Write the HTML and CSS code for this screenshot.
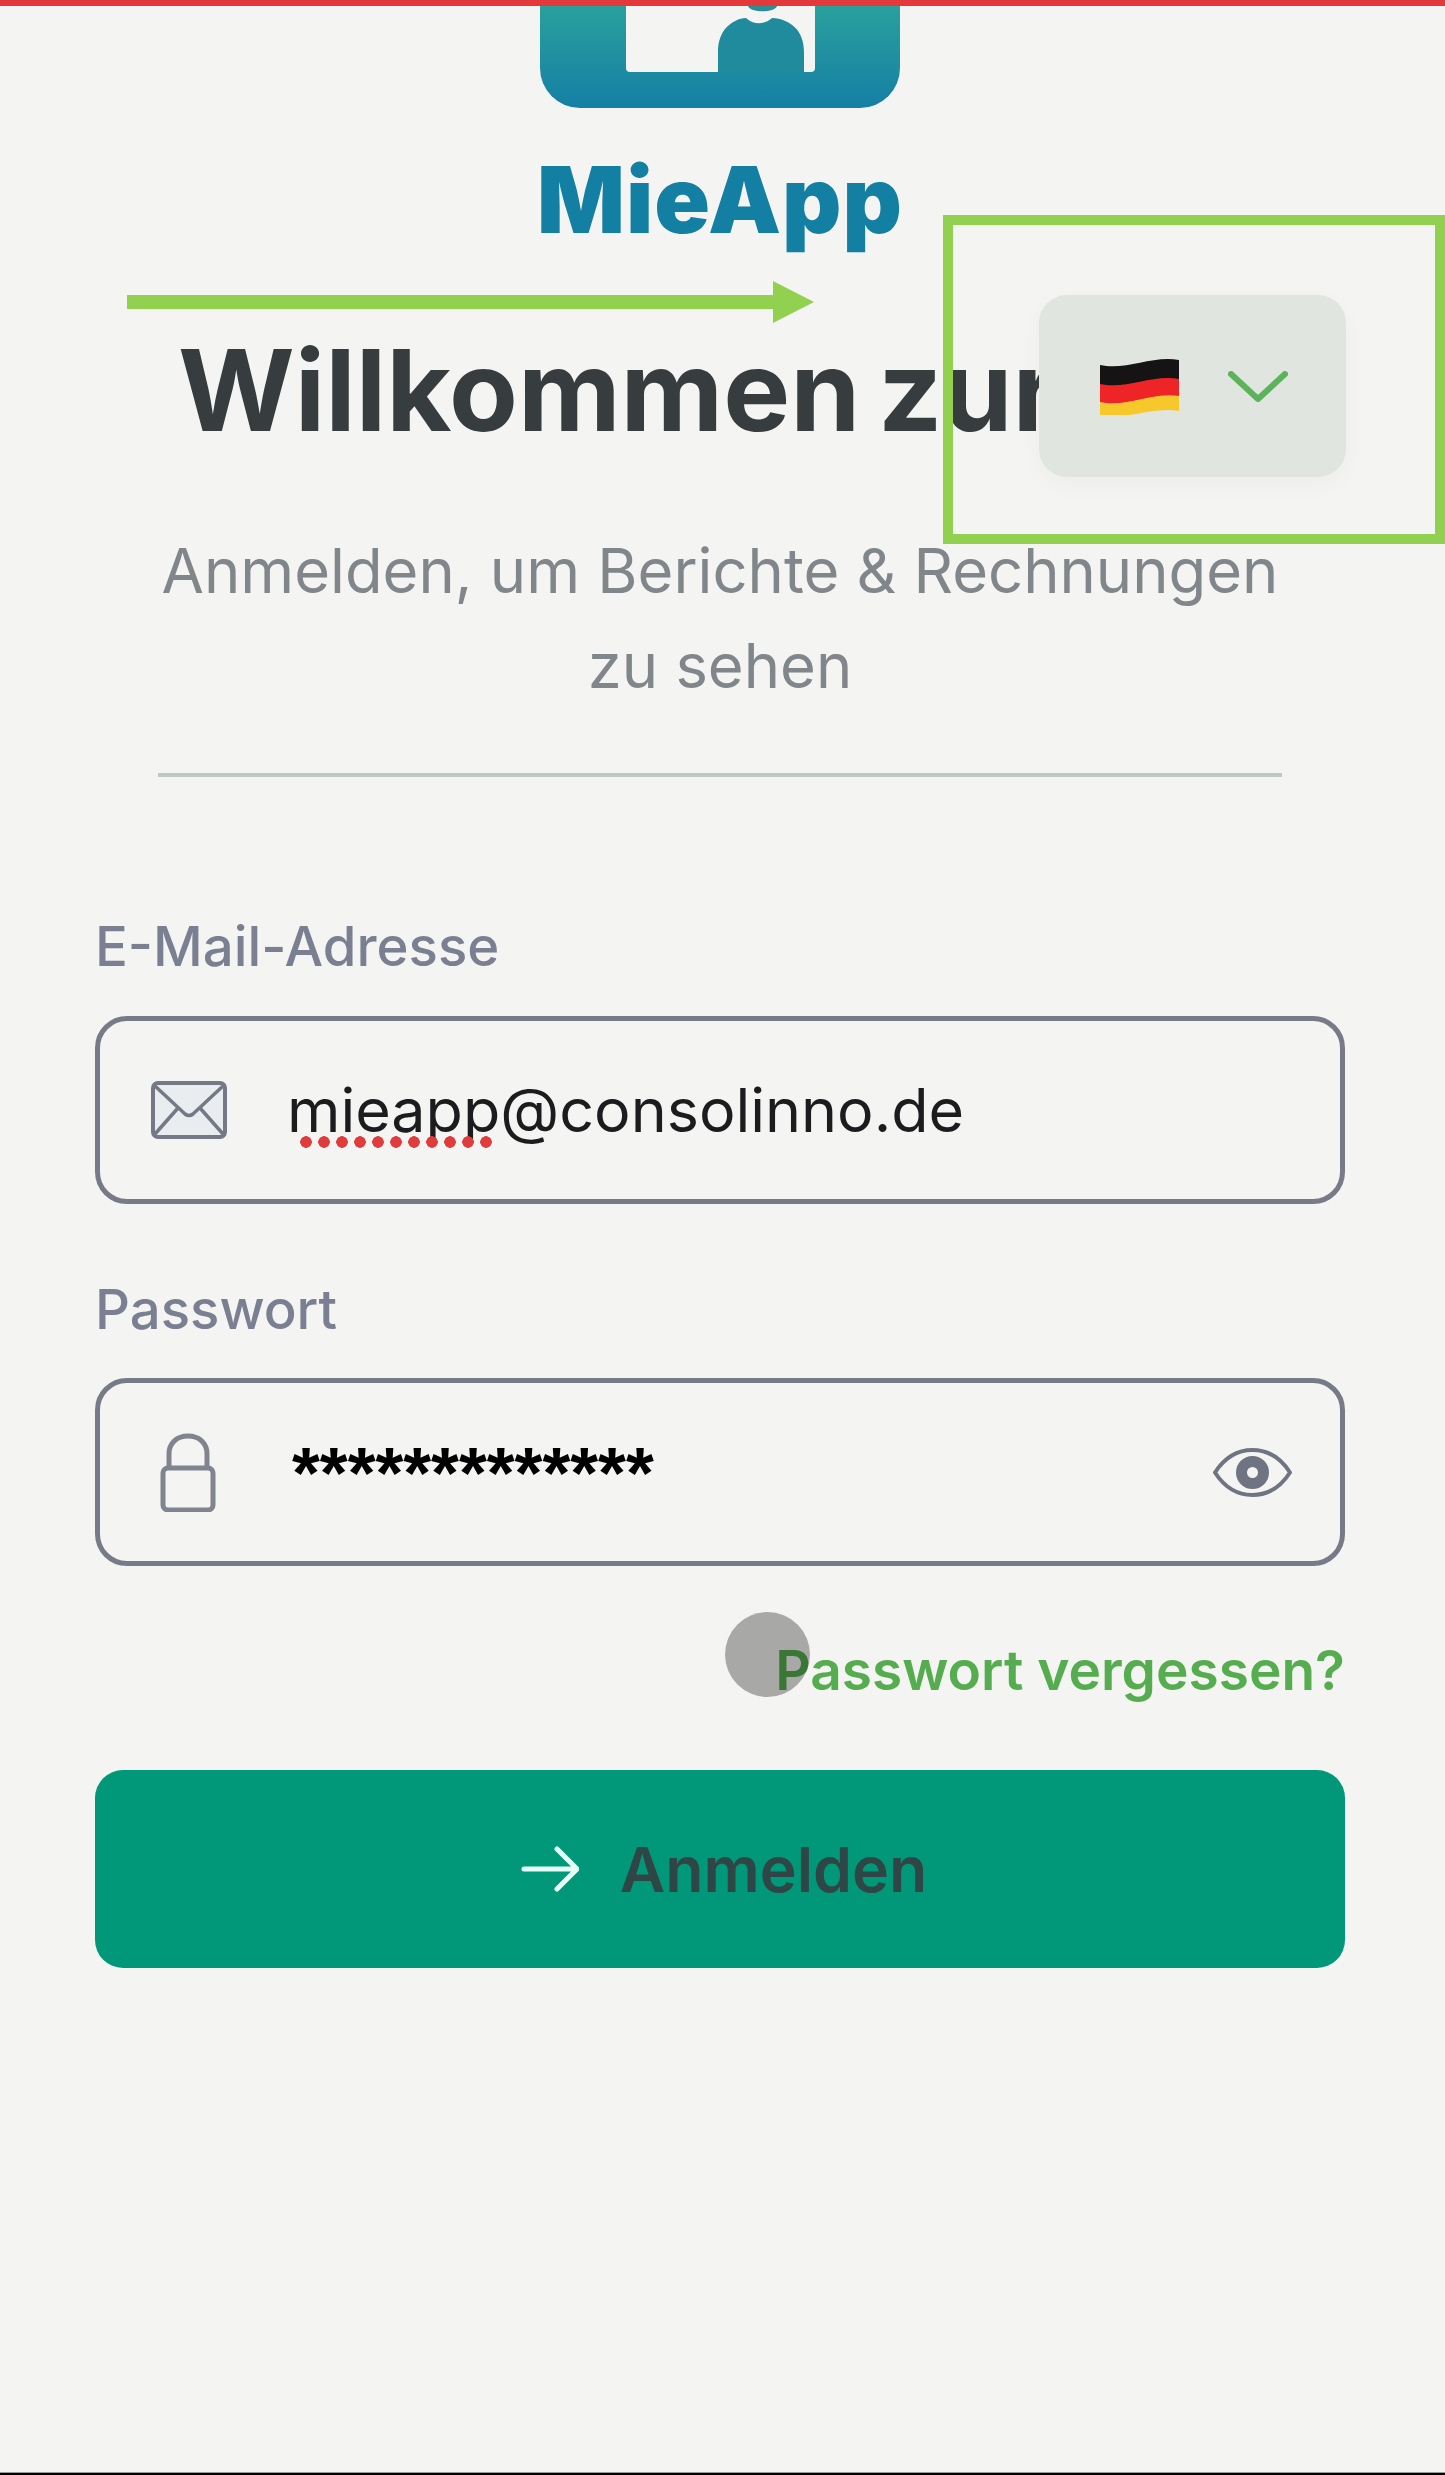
FILE: index.html
```html
<!DOCTYPE html>
<html lang="de">
<head>
    <meta charset="UTF-8">
    <title>MieApp Anmelden</title>
    <link rel="stylesheet" href="styles.css">
</head>
<body>
    <div class="top-bar"></div>

    <main class="login">
        <!-- Logo, cut off at the top of the screen -->
        <svg class="logo" viewBox="0 0 360 102" aria-hidden="true">
            <defs>
                <linearGradient id="logo-fill" x1="0" y1="0" x2="0" y2="1">
                    <stop offset="0" stop-color="#2aa09e"/>
                    <stop offset="1" stop-color="#157fa4"/>
                </linearGradient>
            </defs>
            <path d="M0 0H360V62A40 40 0 0 1 320 102H40A40 40 0 0 1 0 62Z" fill="url(#logo-fill)"/>
            <path d="M86 0H275V62Q275 66 271 66H90Q86 66 86 62Z" fill="#f4f4f2"/>
            <path d="M178 66V46C178 24 192 13 206 12C213 19 225 19 232 12C250 13 264 24 264 46V66Z" fill="#1f8b9c"/>
            <path d="M208 0H237C235 7 210 7 208 0Z" fill="#2b8e94"/>
        </svg>
        <div class="brand">MieApp</div>

        <h1 class="title">Willkommen zur</h1>
        <p class="subtitle">Anmelden, um Berichte &amp; Rechnungen<br>zu sehen</p>
        <hr class="divider">

        <form class="login-form">
            <label class="field-label">E-Mail-Adresse</label>
            <div class="field">
                <svg class="icon-mail" viewBox="0 0 76 58" aria-hidden="true">
                    <rect x="2" y="2" width="72" height="54" rx="5" fill="#e9edf0" stroke="#747985" stroke-width="4"/>
                    <path d="M4 5L34 33Q38 36 42 33L72 5M4 53L27 27M72 53L49 27" fill="none" stroke="#747985" stroke-width="3.5"/>
                </svg>
                <span class="field-value">
                    mieapp@consolinno.de
                    <span class="squiggle"></span>
                </span>
            </div>

            <label class="field-label field-label-next">Passwort</label>
            <div class="field">
                <svg class="icon-lock" viewBox="0 0 56 79" aria-hidden="true">
                    <path d="M9 36V21C9 10 17 3 28 3S47 10 47 21V36" fill="none" stroke="#80848f" stroke-width="5"/>
                    <rect x="3" y="35" width="50" height="42" rx="5" fill="none" stroke="#80848f" stroke-width="5"/>
                </svg>
                <span class="field-stars">*************</span>
                <svg class="icon-eye" viewBox="0 0 79 49" aria-hidden="true">
                    <path d="M2 24.5C12 9 25 2 39.500 2S67 9 77 24.500C67 40 54 47 39.500 47S12 40 2 24.500Z" fill="none" stroke="#6f7482" stroke-width="4"/>
                    <circle cx="39.500" cy="24.500" r="11" fill="none" stroke="#6f7482" stroke-width="11"/>
                </svg>
            </div>

            <div class="forgot-row">
                <a class="forgot">Passwort vergessen?</a>
            </div>

            <button type="button" class="submit">
                <svg class="icon-arrow" viewBox="0 0 58 46" aria-hidden="true">
                    <path d="M3 23H55M36 3L56 23L36 43" fill="none" stroke="#e8fff8" stroke-width="5" stroke-linecap="round" stroke-linejoin="round"/>
                </svg>
                Anmelden
            </button>
        </form>
    </main>

    <div class="bottom-line"></div>

    <!-- Language dropdown lies over the title -->
    <div class="lang-select">
        <svg class="flag" viewBox="0 0 79 57" aria-hidden="true">
            <path d="M0 7C26 13 52 -3 79 2V22C52 17 26 33 0 27Z" fill="#151313"/>
            <path d="M0 26C26 32 52 16 79 21V39C52 34 26 50 0 45Z" fill="#ee2426"/>
            <path d="M0 44C26 50 52 34 79 38V53C52 48 26 63 0 57Z" fill="#f6c82b"/>
        </svg>
        <svg class="chevron" viewBox="0 0 60 31" aria-hidden="true">
            <path d="M3 3L30 28L57 3" fill="none" stroke="#5cb35a" stroke-width="6" stroke-linecap="round" stroke-linejoin="round"/>
        </svg>
    </div>

    <!-- Annotations drawn on top of the screenshot -->
    <svg class="note-arrow" viewBox="0 0 687 42" aria-hidden="true">
        <path d="M0 14H646V0L687 21L646 42V28H0Z" fill="#91d14f"/>
    </svg>
    <div class="note-box"></div>
    <div class="touch-dot"></div>
</body>
</html>
```

FILE: styles.css
```css
/* General Page Styling */
body {
    margin: 0;
    height: 2475px;
    position: relative;
    overflow: hidden;
    display: flex;
    flex-direction: column;
    background-color: #f4f4f2;
    font-family: 'Inter', 'Liberation Sans', sans-serif;
    color: #373c3f;
}

.top-bar {
    height: 6px;
    background-color: #e3393a;
}

.bottom-line {
    margin-top: auto;
    height: 2px;
    background-color: #000;
    border-top: 1px solid #999;
}

.login {
    display: flex;
    flex-direction: column;
    padding: 0 100px 0 95px;
    text-align: center;
}

/* Logo */
.logo {
    display: block;
    width: 360px;
    height: 102px;
    margin: 0 auto;
}

.brand {
    margin-top: 42px;
    margin-bottom: -4px;
    font-size: 92px;
    line-height: 100px;
    font-weight: 900;
    letter-spacing: 1px;
    color: #137fa3;
}

/* Heading */
.title {
    margin: 79px 0 0;
    padding-left: 83px;
    font-size: 112.5px;
    line-height: 130px;
    font-weight: 700;
    word-spacing: -9px;
    text-align: left;
    white-space: nowrap;
}

.subtitle {
    margin: 68px 0 0;
    font-size: 61.5px;
    line-height: 95px;
    color: #80868a;
}

.divider {
    width: 1124px;
    height: 4px;
    margin: 60px auto 0;
    border: none;
    background-color: #bcc8c4;
}

/* Form */
.login-form {
    display: flex;
    flex-direction: column;
    margin-top: 139px;
    text-align: left;
}

.field-label {
    margin-bottom: 40px;
    font-size: 54.5px;
    line-height: 60px;
    font-weight: 500;
    color: #7a8091;
}

.field-label-next {
    margin-top: 75px;
    margin-bottom: 39px;
}

.field {
    box-sizing: border-box;
    height: 188px;
    display: flex;
    align-items: center;
    padding: 0 48px 0 51px;
    border: 5px solid #767b87;
    border-radius: 32px;
}

.icon-mail {
    width: 76px;
    height: 58px;
    flex-shrink: 0;
}

.field-value {
    position: relative;
    margin-left: 60px;
    font-size: 61px;
    line-height: 70px;
    color: #1c1c1e;
}

.squiggle {
    position: absolute;
    left: 13px;
    top: 61px;
    width: 198px;
    height: 12px;
    background-image: radial-gradient(circle at 6px 6px, #e03c3c 5.5px, transparent 6px);
    background-size: 18px 12px;
}

.icon-lock {
    width: 56px;
    height: 79px;
    margin-left: 9px;
    flex-shrink: 0;
}

.field-stars {
    margin-left: 76px;
    margin-top: 2px;
    font-family: 'Liberation Sans', sans-serif;
    font-size: 71.5px;
    line-height: 70px;
    font-weight: 700;
    color: #000;
}

.icon-eye {
    width: 79px;
    height: 49px;
    margin-left: auto;
    flex-shrink: 0;
}

.forgot-row {
    margin-top: 74px;
    text-align: right;
}

.forgot {
    display: inline-block;
    font-size: 55px;
    line-height: 60px;
    font-weight: 600;
    color: #55ad4f;
}

.submit {
    height: 198px;
    margin-top: 70px;
    padding: 0 0 0 8px;
    display: flex;
    align-items: center;
    justify-content: center;
    gap: 41px;
    border: none;
    border-radius: 28px;
    background-color: #009879;
    font-family: inherit;
    font-size: 62.5px;
    font-weight: 600;
    color: #2f4646;
}

.icon-arrow {
    width: 58px;
    height: 46px;
}

/* Language dropdown */
.lang-select {
    position: absolute;
    left: 1039px;
    top: 295px;
    width: 307px;
    height: 182px;
    box-sizing: border-box;
    padding: 0 58px 0 61px;
    display: flex;
    align-items: center;
    justify-content: space-between;
    border-radius: 28px;
    background-color: #e0e5e0;
    box-shadow: 0 8px 24px rgba(0, 0, 0, 0.03);
}

.flag {
    width: 79px;
    height: 57px;
}

.chevron {
    width: 60px;
    height: 31px;
}

/* Annotations */
.note-arrow {
    position: absolute;
    left: 127px;
    top: 281px;
    width: 687px;
    height: 42px;
}

.note-box {
    position: absolute;
    left: 943px;
    top: 215px;
    width: 482px;
    height: 309px;
    border: 10px solid #91d14f;
}

.touch-dot {
    position: absolute;
    left: 725px;
    top: 1612px;
    width: 85px;
    height: 85px;
    border-radius: 50%;
    background-color: rgba(0, 0, 0, 0.31);
}
```
